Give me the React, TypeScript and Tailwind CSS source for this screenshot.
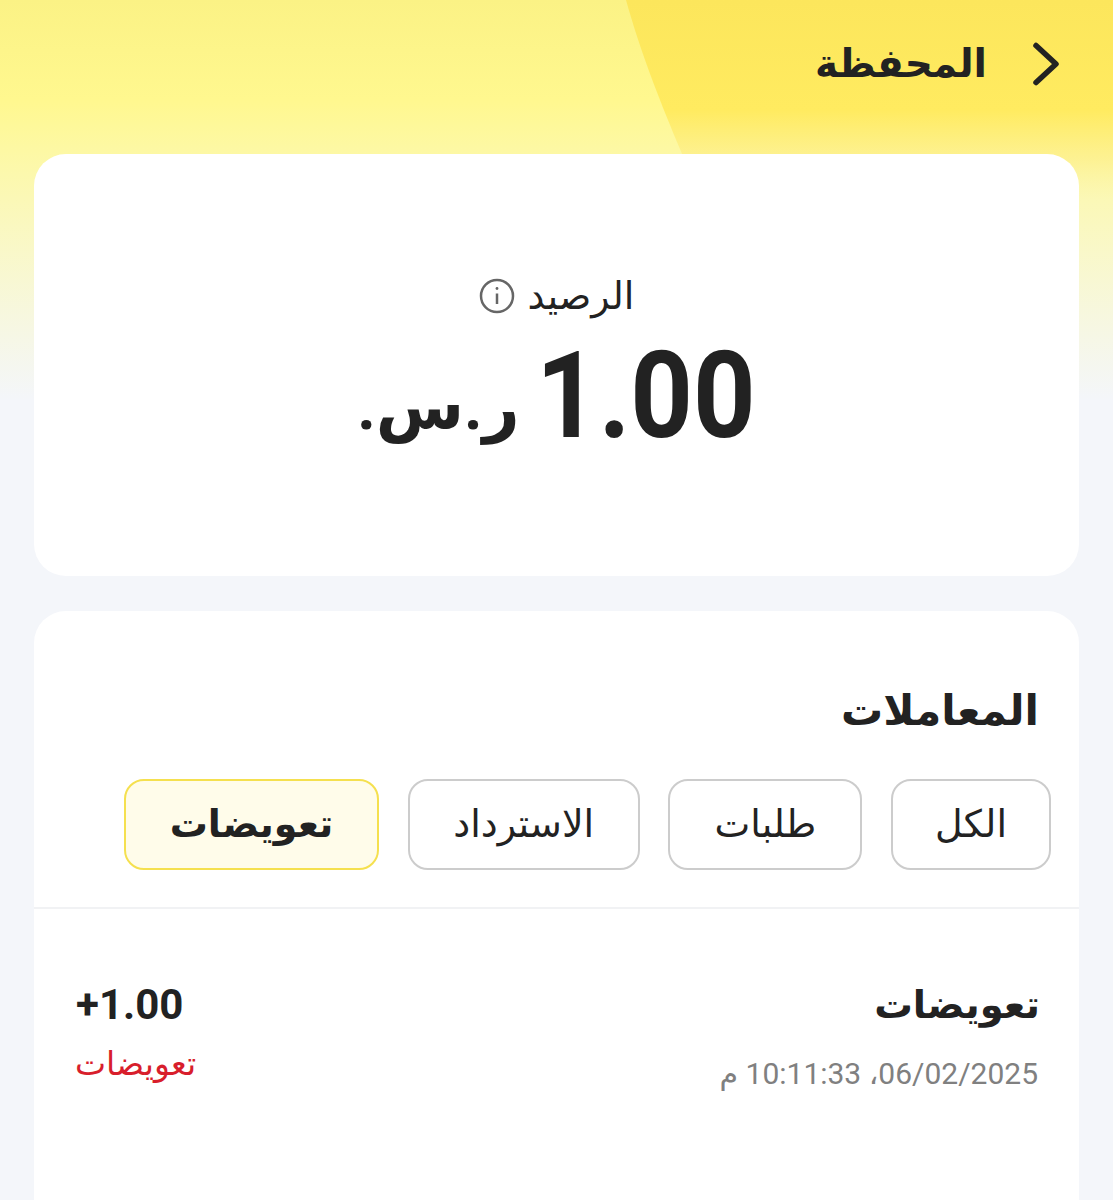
const tabs = [
  { name: "الكل", width: "w-[160px]" },
  { name: "طلبات", width: "w-[194px]" },
  { name: "الاسترداد", width: "w-[232px]" },
  { name: "تعويضات", width: "w-[255px]" },
]

function App() {
  const activeTab = "تعويضات"

  return (
    <div dir="rtl" className="relative h-[1200px] w-full overflow-hidden bg-[#f4f6fa] font-['Roboto','Noto_Sans','DejaVu_Sans',sans-serif] text-[#222222]">
      {/* yellow wash behind header */}
      <div className="absolute inset-x-0 top-0 h-[400px] bg-gradient-to-b from-[#fbf285] via-[#fff88f] via-25% to-[#f4f6fa]" />
      <svg className="absolute left-0 top-0" width="1113" height="200" viewBox="0 0 1113 200">
        <defs>
          <linearGradient id="shape" x1="0" y1="0" x2="0" y2="1">
            <stop offset="0" stopColor="#fce65c" />
            <stop offset="0.55" stopColor="#ffeb60" />
            <stop offset="0.8" stopColor="#fdf08e" stopOpacity="0.8" />
            <stop offset="1" stopColor="#fbf3a8" stopOpacity="0" />
          </linearGradient>
        </defs>
        <path d="M626 0 C640 50 660 105 702 200 L1113 200 L1113 0 Z" fill="url(#shape)" />
      </svg>

      <div className="relative">
        <header dir="ltr" className="flex h-[154px] items-start justify-end gap-[44px] pr-[52px] pt-[38px]">
          <h1 dir="rtl" className="text-[39px] font-bold leading-[52px]">المحفظة</h1>
          <svg width="30" height="48" viewBox="0 0 30 48" fill="none" stroke="#222222" strokeWidth="5.5" strokeLinecap="round" strokeLinejoin="round" className="mt-[1px]">
            <path d="M5 6.5L25 25L5 43.5" />
          </svg>
        </header>

        <section className="mx-[34px] flex h-[422px] flex-col items-center rounded-[32px] bg-white pt-[118px]">
          <div className="flex items-center gap-[13px] text-[38px] leading-[48px]">
            <span>الرصيد</span>
            <svg width="36" height="36" viewBox="0 0 36 36" fill="none" stroke="#666666" strokeWidth="2.5">
              <circle cx="18" cy="18" r="16" />
              <path d="M18 15.5V26" />
              <circle cx="18" cy="10.5" r="1.4" fill="#666666" stroke="none" />
            </svg>
          </div>
          <div dir="ltr" className="mt-[26px] mr-[-22px] flex items-baseline gap-[17px] font-bold">
            <span dir="rtl" className="-translate-y-[8px] text-[64px] leading-[100px]">ر.س.</span>
            <span className="origin-left scale-x-[0.91] text-[120px] leading-[100px]">1.00</span>
          </div>
        </section>

        <section className="mx-[34px] mt-[35px] h-[700px] rounded-t-[32px] bg-white">
          <h2 className="pl-[41px] pr-[40px] pt-[74px] text-[42px] font-bold leading-[52px]">المعاملات</h2>
          <div className="mt-[42px] flex gap-[28.67px] border-b-2 border-[#f1f2f4] px-[28px] pb-[37px]">
            {tabs.map((tab) => (
              <button
                key={tab.name}
                className={tab.name === activeTab
                  ? `${tab.width} h-[91px] rounded-[20px] border-2 border-[#f5e04f] bg-[#fffcea] text-[38px] font-bold`
                  : `${tab.width} h-[91px] rounded-[20px] border-2 border-[#cccccc] bg-white text-[38px]`}
              >
                {tab.name}
              </button>
            ))}
          </div>
          <div className="flex justify-between px-[41px] pt-[70px]">
            <div>
              <div className="mr-[-2px] text-[38.5px] font-bold leading-[52px]">تعويضات</div>
              <div className="mt-[21px] text-[30px] leading-[44px] text-[#808080]">06/02/2025، 10:11:33 م</div>
            </div>
            <div className="flex flex-col items-end">
              <div dir="ltr" className="ml-px text-[42px] font-bold leading-[52px]">+1.00</div>
              <div className="mt-[11px] text-[33px] leading-[44px] text-[#d81e2c]">تعويضات</div>
            </div>
          </div>
        </section>
      </div>
    </div>
  )
}

export default App
